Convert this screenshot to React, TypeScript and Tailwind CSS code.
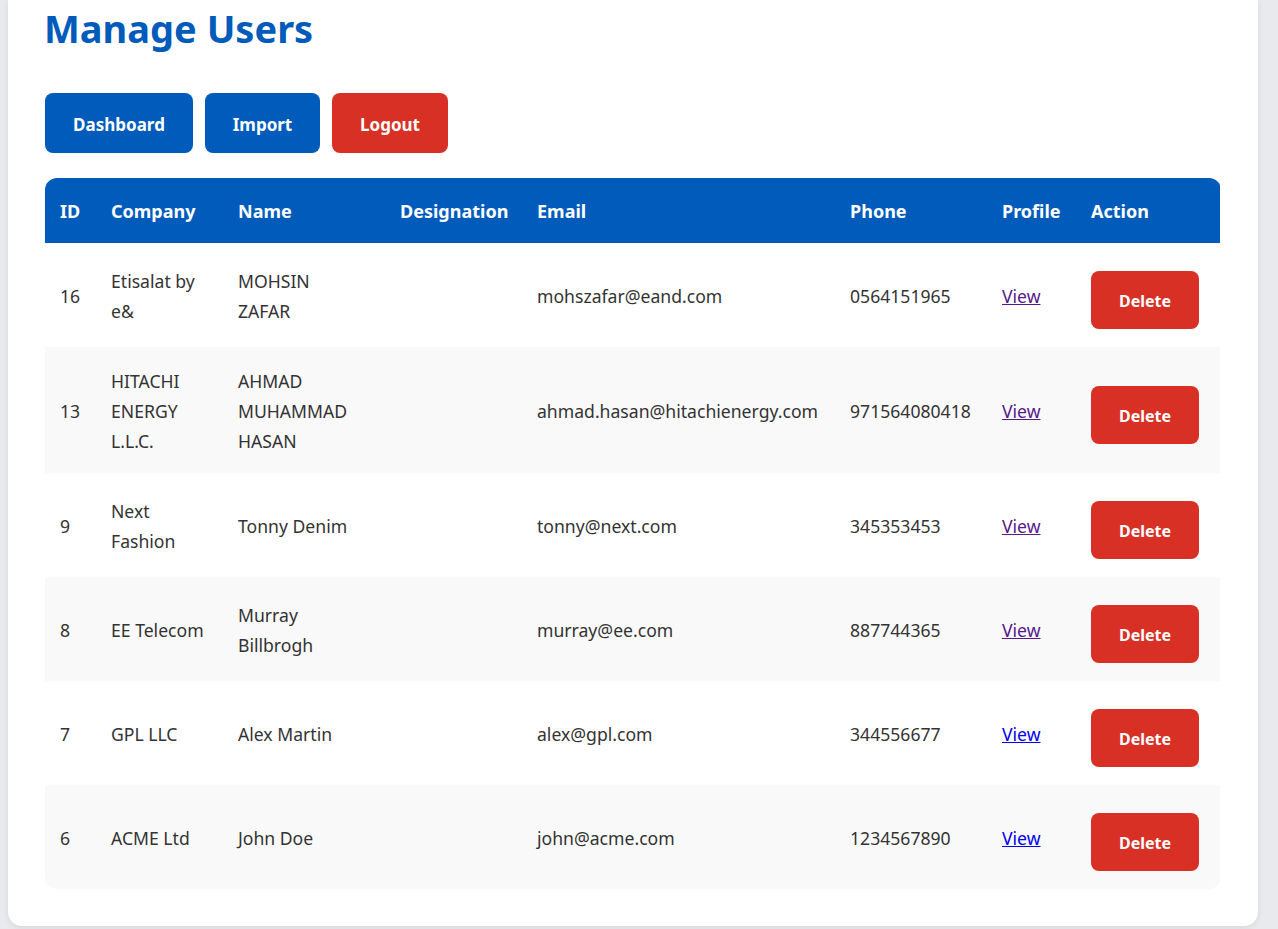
import React from "react";

type U = { id: string; company: string[]; name: string[]; email: string; phone: string; visited: boolean };

const users: U[] = [
  { id: "16", company: ["Etisalat by", "e&"], name: ["MOHSIN", "ZAFAR"], email: "mohszafar@eand.com", phone: "0564151965", visited: true },
  { id: "13", company: ["HITACHI", "ENERGY", "L.L.C."], name: ["AHMAD", "MUHAMMAD", "HASAN"], email: "ahmad.hasan@hitachienergy.com", phone: "971564080418", visited: true },
  { id: "9", company: ["Next", "Fashion"], name: ["Tonny Denim"], email: "tonny@next.com", phone: "345353453", visited: true },
  { id: "8", company: ["EE Telecom"], name: ["Murray", "Billbrogh"], email: "murray@ee.com", phone: "887744365", visited: true },
  { id: "7", company: ["GPL LLC"], name: ["Alex Martin"], email: "alex@gpl.com", phone: "344556677", visited: false },
  { id: "6", company: ["ACME Ltd"], name: ["John Doe"], email: "john@acme.com", phone: "1234567890", visited: false },
];

const font = { fontFamily: '"Noto Sans", "Open Sans", Arial, sans-serif' };

export default function App() {
  return (
    <div className="min-h-[929px] bg-[#e9eaee] pl-[8px] pr-[20px] pb-[4px]" style={font}>
      <div className="bg-white rounded-b-[14px] shadow-[0_2px_6px_rgba(0,0,0,0.08)] px-[37px] pb-[37px] pt-[4px]">
        <h1 className="text-[38px] leading-[48px] font-bold text-[#005bbb] -ml-[1px]">Manage Users</h1>
        <div className="flex gap-[12px] mt-[41px]">
          <button className="w-[148px] h-[60px] pt-[3px] rounded-[8px] bg-[#005bbb] text-white font-bold text-[17px]">Dashboard</button>
          <button className="w-[115px] h-[60px] pt-[3px] rounded-[8px] bg-[#005bbb] text-white font-bold text-[17px]">Import</button>
          <button className="w-[116px] h-[60px] pt-[3px] rounded-[8px] bg-[#d93025] text-white font-bold text-[17px]">Logout</button>
        </div>
        <div className="mt-[25px] rounded-[12px] overflow-hidden">
          <table className="w-[1175px] border-collapse table-fixed">
            <colgroup>
              <col className="w-[51px]" />
              <col className="w-[127px]" />
              <col className="w-[162px]" />
              <col className="w-[137px]" />
              <col className="w-[313px]" />
              <col className="w-[152px]" />
              <col className="w-[89px]" />
              <col className="w-[144px]" />
            </colgroup>
            <thead>
              <tr className="bg-[#005bbb] text-white h-[65px]">
                {["ID", "Company", "Name", "Designation", "Email", "Phone", "Profile", "Action"].map((h) => (
                  <th key={h} className="text-left px-[15px] pt-[2px] font-bold text-[18px] whitespace-nowrap">{h}</th>
                ))}
              </tr>
            </thead>
            <tbody className="text-[#333] text-[17.6px] leading-[30px]">
              {users.map((u, i) => (
                <tr key={u.id} className={i % 2 === 1 ? "bg-[#f9f9f9]" : "bg-white"}>
                  <td className="px-[15px] pt-[19px] pb-[17px] align-middle">{u.id}</td>
                  <td className="px-[15px] pt-[19px] pb-[17px] align-middle">
                    {u.company.map((c) => (
                      <div key={c}>{c}</div>
                    ))}
                  </td>
                  <td className="px-[15px] pt-[19px] pb-[17px] align-middle">
                    {u.name.map((c) => (
                      <div key={c}>{c}</div>
                    ))}
                  </td>
                  <td className="px-[15px] pt-[19px] pb-[17px] align-middle"></td>
                  <td className="px-[15px] pt-[19px] pb-[17px] align-middle whitespace-nowrap">{u.email}</td>
                  <td className="px-[15px] pt-[19px] pb-[17px] align-middle">{u.phone}</td>
                  <td className="px-[15px] pt-[19px] pb-[17px] align-middle">
                    <a href="#" className={"underline " + (u.visited ? "text-[#551a8b]" : "text-[#0000ee]")}>View</a>
                  </td>
                  <td className="px-[15px] pt-[18px] pb-[18px] align-middle">
                    <button className="mt-[10px] w-[108px] h-[58px] pt-[1px] rounded-[8px] bg-[#d93025] text-white font-bold text-[16px] block">Delete</button>
                  </td>
                </tr>
              ))}
            </tbody>
          </table>
        </div>
      </div>
    </div>
  );
}
